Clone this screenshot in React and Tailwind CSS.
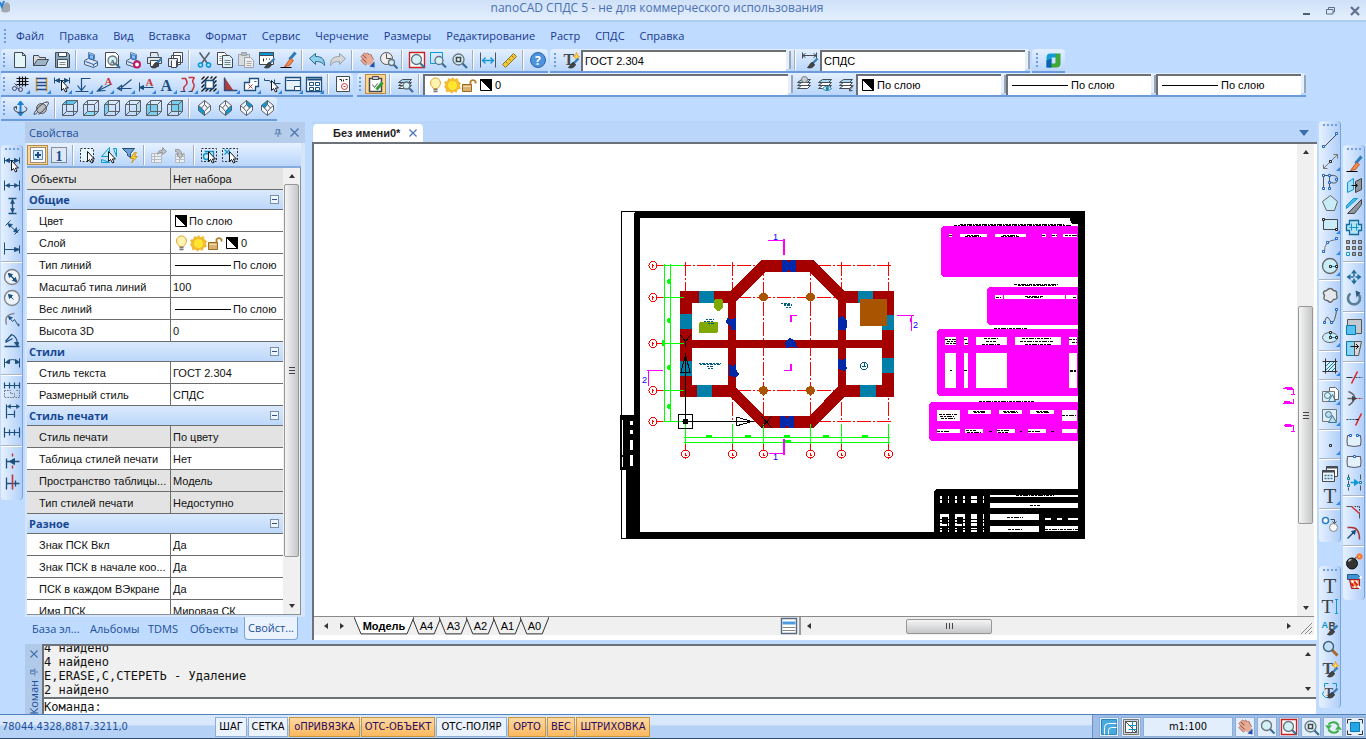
import React from 'react';
import clsx from 'clsx';

const INK = '#444a52';
const NAVY = '#1c4f7c';
const CYAN = '#0a98d6';
const RED = '#c4353a';
const SKY = '#c9ecf7';

const p = (d, stroke = INK, fill = 'none', w = 1) => (
    <path d={d} stroke={stroke} fill={fill} strokeWidth={w} />
);
const t = (ch, x, y, size, fill = INK, family = 'Liberation Serif') => (
    <text x={x} y={y} fontSize={size} fill={fill} fontFamily={family} fontWeight="bold">{ch}</text>
);

// shared pieces
const lens = (x, y, r) => [
    p(`M${x + r * 0.7} ${y + r * 0.7}L${x + r + 3} ${y + r + 3}`, '#3d6f9c', 'none', 2.2),
    p(`M${x - r} ${y}a${r} ${r} 0 1 0 ${2 * r} 0a${r} ${r} 0 1 0 ${-2 * r} 0`, '#66727d', '#d3f0f5', 1.3),
];
const brush = [p('M15 6L10 11', '#3c7fb5', 'none', 2.4), p('M10 10c-2 0-2 2-5 5c3 1 6 0 7-3z', '#333', '#444')];
const cursor = p('M7 4v10l2-2l2 3.500l1.500-.8l-1.600-3.200h3z', '#000', '#fff', 0.9);
const node = (x, y) => p(`M${x - 1} ${y - 1}h2v2h-2z`, '#1d62c9', '#fff', 1);
const hand = [
    p('M2 3L8 9M4 1L10 7M7 1L12 7M10 2L13 8M2 7L7 12', '#8f4a3b', 'none', 3),
    p('M2 3L8 9M4 1L10 7M7 1L12 7M10 2L13 8M2 7L7 12', '#e8ac96', 'none', 1.8),
    p('M6 6l6-1l2 4l-2 4l-4-1z', 'none', '#e8ac96'),
    p('M10 14l5-5v6z', 'none', '#1f50b5'),
];
const cube = [p('M0 4h11v11H0zM0 4L4 0h11v11L11 15M11 4L15 0M4 0v11h11M4 11L0 15', '#5a6068')];
const gem = [
    p('M8 0L14 5v5L8 15L2 10V5z', '#5a6068'),
    p('M8 0v4L5 7.500L8 11L11 7.500L8 4M2 5l3 2.500M14 5l-3 2.500M8 11v4', '#5a6068'),
];
const stack = [
    p('M5 9h9l-3 3H1z', INK, '#fff'),
    p('M5 6h9l-3 3H1z', INK, '#fff'),
    p('M5 3h9l-3 3H1z', INK, '#a9d8ef'),
];
const printer = [
    p('M5 6V0l6 2v5', '#5d7fa8', '#f4f8fc'),
    p('M1 8l4-2l9 3v4l-4 2l-9-3z', '#4a5f7d', '#dbe5f0'),
    p('M6 2l4 1v4L6 6z', '#2d6fd1', '#8fc0f5'),
    p('M2 9l8 3v2M10 12l4-2', '#2458b5'),
];

const icons = {
    new: [p('M2 0h8l3 3v12H2z', INK, '#e3f5f7'), p('M10 0v3h3')],
    open: [p('M0 13V3h5l1 2h6v3', INK, '#ddd'), p('M0 13L4 7h11l-3 6z', INK, '#9db4c4')],
    save: [p('M1 0h12l2 2v13H1z', INK, '#86a9bd'), p('M4 0h8v4H4z', INK, '#fff'), p('M3 7h10v8H3z', INK, '#eef8fa'), p('M5 10h6M5 12h6', '#888')],
    print: printer,
    preview: [p('M1 0h10l3 3v12H1z', INK, '#fff'), ...lens(8, 8, 4.5), t('A', 5.5, 11, 7)],
    printset: [...printer, p('M8.500 12a3 3 0 1 0 6 0a3 3 0 1 0-6 0', '#c2185b', '#fff', 2)],
    plot: [p('M4 4V0h7l1 4M1 5h14v6H1z', INK, '#dfe5ea'), p('M4 8h8v6H4z', INK, '#fff'), ...brush],
    publish: [p('M6 0h9v10H6zM4 3h9v9H4z', INK, '#fff'), p('M1 6h9v8H1z', INK, '#e3e7ea'), p('M4 8v7h5V8', INK, '#fff')],
    cut: [p('M3 0L11 11M13 0L5 11', '#56616b', 'none', 1.6), p('M2 13a2 2 0 1 0 4-1a2 2 0 1 0-4 1M10 12a2 2 0 1 0 4 1a2 2 0 1 0-4-1', CYAN, 'none', 1.6)],
    copy: [p('M0 0h7l2 2v10H0z', INK, '#fff'), p('M5 3h7l3 3v9H5z', INK, '#dff3f8'), p('M7 8h6M7 10h6M7 12h6M2 4h2M2 6h2M2 8h2', '#78838c')],
    paste: [p('M0 2h11v11H0z', '#9aa1a8', '#d9dde0'), p('M3 0h5v3H3z', '#9aa1a8', '#bbb'), p('M6 5h6l3 3v7H6z', '#9aa1a8', '#eee'), p('M8 9h5M8 11h5M8 13h5', '#aaa')],
    match: [p('M0 0h14v12H0z', INK, '#fff'), p('M0 0h14v3H0z', INK, CYAN), p('M4 6v3M7 6v1M10 6v1', '#222'), ...brush],
    erase: [p('M15 0L9 7', '#2d7cb8', 'none', 3), p('M10 6l3 2l-4 5l-5 1z', '#c55a2a', '#f08a4c'), p('M0 15h11', '#000')],
    undo: [p('M0 6L6 1v3c6 0 9 2 9 9c-2-3-4-4-9-4v3z', '#2c6a94', '#8fd0ea')],
    redo: [p('M15 6L9 1v3C3 4 0 6 0 13c2-3 4-4 9-4v3z', '#9a9fa5', '#d4d6d8')],
    pan: hand,
    zoomrt: [p('M0 6a6 6 0 1 0 12 0a6 6 0 1 0-12 0M6 1v5h5', '#555', '#eee'), ...lens(11, 10, 3)],
    zoomwin: [p('M0 0h15v15H0z', '#c62323', '#fff', 1.4), ...lens(7, 7, 5)],
    zoomsel: [p('M0 0h12v11H0z', CYAN), ...lens(8.5, 8, 4)],
    zoomall: [...lens(7, 7, 5.5), p('M5 5h4v4H5z', INK, '#fff', 1.6)],
    dist: [p('M0 0v15M15 0v15', '#555'), p('M2 8h11M5 5L2 8l3 3M10 5l3 3l-3 3', CYAN, 'none', 1.3)],
    ruler: [p('M1 12L12 1l3 3L4 15z', '#8b7320', '#f0c93a'), p('M4 9l2 2M7 6l2 2M10 3l2 2', '#8b7320')],
    help: [p('M0 7.500a7.500 7.500 0 1 0 15 0a7.500 7.500 0 1 0-15 0', '#2c66b0', '#4d93dd'), t('?', 4.5, 12, 12, '#fff', 'Open Sans')],
    tstyle: [t('T', 0, 12, 16), p('M13 0l1 3l2 1l-2 1l-1 3l-1-3l-2-1l2-1z', '#f59a1d', '#ffe45c', 1), ...brush],
    dstyle: [p('M0 0v6M14 0v6M0 3h14M3 1L0 3l3 2M11 1l3 2l-3 2'), ...brush],
    nano: [
        <path key="n1" d="M1 15V5q0-4 4-4h6v4H7q-1 0-1 1v9z" fill="#129bd7" />,
        <path key="n2" d="M15 1v10q0 4-4 4H5v-4h4q1 0 1-1V1z" fill="#3fa63a" />,
        <path key="n3" d="M1 15V8l5-2v9z" fill="#0b62ae" />,
    ],
    grid: [p('M7 0v10M10 0v10M13 0v10M4 2h12M4 5h12M4 8h12', '#111', 'none', 1.2), p('M5 10L2 7M0 12a2 2 0 1 0 4 0a2 2 0 1 0-4 0M6 13a2 2 0 1 0 4 0a2 2 0 1 0-4 0M4 11l3 2', '#446')],
    ladder: [p('M3 1v14M13 1v14', '#d69c16', 'none', 1.6), p('M3 2h10M3 6h10M3 9h10M3 13h10', '#24478f', 'none', 1.3)],
    dimcur: [p('M0 1v6M15 1v6M0 4h15', NAVY), p('M1 4l4-2v4zM14 4l-4-2v4z', NAVY, NAVY), cursor],
    level: [p('M0 15h13M6 14V2h9M2 9l4 5l4-5', NAVY, 'none', 1.2)],
    leader: [p('M14 8L2 14M6 9L1 14.500L9 14', NAVY, 'none', 1.2), t('A', 8, 8, 11, RED)],
    slope: [p('M0 12h14M14 3L4 11M4 9l-4 3l4 2z', NAVY, 'none', 1.2)],
    note: [p('M1 6v9M1 11h14M1 11l4-2v4z', NAVY, NAVY), t('A', 7, 9, 11, RED)],
    text: [t('A', 1, 14, 16, NAVY)],
    curve: [p('M1 2h4q3 5 0 7t-1 6M8 1h6M14 1q-3 4-1 6t-2 8', RED, 'none', 1.5), p('M0 15h5M8 15h4', NAVY)],
    hatchfr: [p('M0 3L3 0M0 7L7 0M9 2L11 0M11 4L15 0M12 7l3-3M12 11l3-3M8 15l7-7M12 15l3-3M4 15l3-3M0 15l4-4M0 11l3-3', '#111', 'none', 1.3), p('M4 4h8v8H4z', NAVY, '#fff', 1.6)],
    corner: [p('M2 1v13l9 0z', 'none', '#b23b3b'), p('M2 1v13h13', '#30507a', 'none', 1.4)],
    group: [p('M6 2h9v8h-3v4H1V6h5z', NAVY, '#fff', 1.3), p('M5 8l4 4M9 8l-4 4', RED), p('M11 5h2', NAVY)],
    pick: [p('M0 2v2h5l2 3h9M10 7V3', NAVY), cursor],
    layout: [p('M0 1h15v13H0z', NAVY, '#e6f3fb', 1.3), p('M1 4h14M9 10h6v4H9z', NAVY, '#fff')],
    form: [p('M0 1h15v14H0z', NAVY, '#fff', 1.3), p('M1 3h14', NAVY, 'none', 2), p('M3 6h4v3H3zM9 6h4v3H9zM3 11h4v3H3zM9 11h4v3H9z', NAVY)],
    page: [p('M1 0h13v15H1z', INK, '#fff'), p('M4 3h2v2M8 3v2M10 3h2', '#222'), p('M6 10a3 3 0 1 0 6 0a3 3 0 1 0-6 0M8 10h2', RED)],
    clip: [p('M1 2h12v13H1z', INK, '#fff', 1.5), p('M4 0h6v3H4z', INK, '#ccc'), p('M4 8l2 3l3-4', '#555'), p('M14 6L8 13', '#2f9d3d', 'none', 3)],
    layers: [...stack, ...lens(9, 9, 3.5)],
    lyr1: [...stack, p('M5 3a3 3 0 1 0 6 0a3 3 0 1 0-6 0', '#777', '#c9ced3')],
    lyr2: [...stack, p('M5 12q4.500-4.500 9 0q-4.500 4-9 0z', '#1681ab', '#fff'), p('M8.500 12a1.300 1.300 0 1 0 2.600 0a1.300 1.300 0 1 0-2.600 0', '#1681ab', '#1681ab')],
    lyr3: [...stack, p('M15 9l-4 5M11 12v2.500l3-.5')],
    bulb: [p('M3 5.500a5 5 0 1 1 8.500 3.500L10 11H6L4.500 9Q3 8 3 5.500z', '#e0a638', '#fff3b0'), p('M6 12h4M6 14h4', '#777', 'none', 1.4)],
    sun: [p('M8 0l2 2l3-1l.5 3l2.500 1.500L15 8l1 3l-3 .8l-1 3l-3-1l-2 2l-2-2l-3 .5l-.5-3L0 9.500L1 7L0 4.500L3 4l.8-3L6.500 2z', '#e8a51c', '#f5bd2a', 0.5), p('M4 8a4 4 0 1 0 8 0a4 4 0 1 0-8 0', '#ffe94f', '#ffe629')],
    lock: [p('M9 8V4a3 3 0 0 1 5 0v2', '#b07f2a', 'none', 1.8), p('M1 7h9v7H1z', '#9c6a1f', '#d8b271'), p('M2 9h7', '#f3deb4')],
    swatch: [p('M2 2h11v11H2z', '#000', '#fff', 1), p('M2 2L13 13V2z', '#000', '#000', 1)],
    orbit: [p('M8 1v14', '#1d7fd1', 'none', 2), p('M5 4l3-3.500L11 4zM5 12l3 3.500L11 12z', '#1d7fd1', '#1d7fd1'), p('M12 6q4 2 2 4t-6 2t-6-2t2-4M1 7l3-1v3')],
    planet: [p('M3 8a5 5 0 1 0 10 0a5 5 0 1 0-10 0', '#555', '#b9bdc2'), p('M4 12q-5 4-3 0q4-7 10-10q6-2 3 3Q10 11 5 14', '#444')],
    cubeT: [p('M0 4L4 0h11L11 4z', 'none', '#5cc4ec'), ...cube],
    cubeB: [p('M0 15l4-4h11l-4 4z', 'none', '#8fdcf2'), ...cube],
    cubeL: [p('M0 4L4 0v11l-4 4z', 'none', '#7dd2f0'), ...cube],
    cubeR: [p('M11 4l4-4v11l-4 4z', 'none', '#b7dcea'), ...cube],
    cubeF: [p('M0 4h11v11H0z', 'none', '#7accea'), ...cube],
    cubeK: [p('M4 0h11v11H4z', 'none', '#7accea'), ...cube],
    gemSW: [p('M8 0L14 5v5L8 15L2 10V5z', 'none', '#f4f8fc'), p('M2 5L5 7.500L8 11v4L2 10z', 'none', CYAN), ...gem],
    gemSE: [p('M8 0L14 5v5L8 15L2 10V5z', 'none', '#f4f8fc'), p('M14 5L11 7.500L8 11v4L14 10z', 'none', CYAN), ...gem],
    gemNE: [p('M8 0L14 5v5L8 15L2 10V5z', 'none', '#f4f8fc'), p('M8 0v4L11 7.500L14 5z', 'none', CYAN), ...gem],
    gemNW: [p('M8 0L14 5v5L8 15L2 10V5z', 'none', '#f4f8fc'), p('M8 0v4L5 7.500L2 5z', 'none', CYAN), ...gem],
    selplus: [<path key="s" d="M0 0h15v15H0z" fill="#fff" stroke="#333" strokeDasharray="1 1" />, p('M3 3h9v9H3z', '#5b87b5', '#dcebf8'), p('M7.500 4.500v6M4.500 7.500h6', '#174d8d', 'none', 2)],
    selone: [<path key="s" d="M0 0h15v15H0z" fill="#dfe9f5" stroke="#333" strokeDasharray="1 1" />, t('1', 4, 13, 14, '#174d8d')],
    selbox: [<path key="s" d="M0 1h13v13H0z" fill="#e7f6fa" stroke="#333" strokeDasharray="2 1.500" />, cursor],
    selpoly: [p('M0 9L8 0v9zM0 12l8 3H0zM12 1l3 8V1z', CYAN, '#bfe9f8'), cursor],
    filter: [p('M0 1h12L8 6v4L5 8V6z', NAVY, '#6f9fce'), p('M12 5L8 11h3l-2 4.500L15 9h-3l2-4z', '#c78b12', '#ffcf2b', 0.8)],
    toprop: [p('M0 6h10v9H0zM0 9h10M0 12h10M3 6v9', '#b4bbc3', '#eceff1'), p('M6 7q1-5 5-4V0l4 4l-4 3V5q-3-1-5 2z', '#999', '#bcc2c8')],
    fromprop: [p('M3 6h9v9H3zM3 9h9M3 12h9M7 6v9', '#b4bbc3', '#eceff1'), p('M3 2q6-1 6 5h2l-3 4l-4-4h2q0-3-3-3z', '#999', '#bcc2c8')],
    selobj: [<path key="s" d="M0 1h15v13H0z" fill="none" stroke="#333" strokeDasharray="2 1.500" />, p('M3 4h9v7H6M2 9a3 3 0 1 0 6 0a3 3 0 1 0-6 0', '#128fc4', '#c9ecf7', 1.4), cursor],
    selx: [<path key="s" d="M0 1h15v13H0z" fill="none" stroke="#333" strokeDasharray="2 1.500" />, p('M2 2l5 5M7 2L2 7', CYAN, 'none', 1.2), cursor],
    dimlin: [p('M0 3v10M15 3v10M1 8h14', NAVY), p('M1 8l4-2v4zM14 8l-4-2v4z', NAVY, NAVY, 0.6)],
    dimver: [p('M4 0h8M4 15h8M8 1v14', NAVY, 'none', 1.3), p('M8 1l-2 4h4zM8 14l-2-4h4z', NAVY, NAVY, 0.6)],
    dimali: [p('M1 6L6 1M10 15l5-5M3 4l10 9', NAVY), p('M3 4l2 4l3-3zM13 13l-1-5l-3 4z', NAVY, NAVY, 0.6)],
    dimord: [p('M0 2v12M15 5v8M0 9h14', NAVY), p('M15 9l-5-2v4z', NAVY, NAVY)],
    dimdia: [p('M0 7.500a7 7 0 1 0 15 0a7 7 0 1 0-15 0', '#7f858b', '#edf3f8', 1.4), p('M4 4l8 8', NAVY, 'none', 1.4), p('M4 4l4 1l-3 3zM12 12l-4-1l3-3z', NAVY, NAVY)],
    dimrad: [p('M0 7.500a7 7 0 1 0 15 0a7 7 0 1 0-15 0', '#7f858b', '#edf3f8', 1.4), p('M5 5l4 4', NAVY), p('M4 4l4 1l-3 3z', NAVY, NAVY)],
    dimjog: [p('M2 13Q-1 3 10 2', '#7f858b', 'none', 1.4), p('M4 5l4 5l2-2l3 5', NAVY), p('M4 5l4 1l-3 2zM14 12v3M12.500 13.500h3', NAVY, NAVY, 0.7)],
    dimang: [p('M0 14h15M1 9L7 2Q13 4 13 13M1 10l7-4', NAVY, 'none', 1.3), p('M13 14l-3-4h4z', NAVY, NAVY)],
    dimarc: [p('M0 5v9M15 5v9M2 9q6-6 12 0', NAVY), p('M1 9l4-3v4zM15 9l-4-3v4z', NAVY, NAVY)],
    dimqk: [p('M0 0v6M5 0v6M10 0v6M15 0v6M0 3h15', NAVY, 'none', 1.2), <path key="s" d="M0 8h6v3h4v4H0zM12 8h3v7h-4" fill="none" stroke="#777" strokeDasharray="1.500 1" />],
    dimbase: [p('M2 1v14M15 3H3M10 7v7M3 11h7', NAVY, 'none', 1.2), p('M3 3l3-2v4zM15 3l-3-2v4z', NAVY, NAVY, 0.5)],
    dimcont: [p('M0 3v10M5 5v6M10 5v6M15 3v10M0 8h15', NAVY, 'none', 1.2)],
    dimbrk: [p('M2 5v10M2 8h13', NAVY, 'none', 1.3), p('M5 8l5-3v6z', NAVY, NAVY), p('M8 0v3M8 12v3', RED, 'none', 1.4)],
    dimbrk2: [p('M2 3v12M2 9h13M11 6v6', NAVY, 'none', 1.3), p('M8 0v15', RED, 'none', 1.6)],
    line: [p('M2 14L14 2'), node(1, 14), node(14, 1)],
    xline: [p('M1 15L15 1M11 1h4v4M1 11v4h4', '#777'), p('M7 7h2v2H7z', '#222', '#fff')],
    pline: [p('M1 14V1h6v13M8 8q7 2 7-3t-7-4', '#555'), node(1, 1), node(7, 1), node(1, 14), node(7, 14), node(7, 8), node(14, 5)],
    poly: [p('M8 0l7 6L12 15H4L0 6z', '#666', SKY)],
    rect: [p('M1 3h14v10H1z', INK, SKY), p('M0 2h2v2H0zM13 12h2v2h-2z', '#222', '#fff')],
    arc: [p('M2 15Q1 3 14 2', '#777'), node(1, 14), node(5, 5), node(14, 1)],
    circle: [p('M0 7.500a7 7 0 1 0 15 0a7 7 0 1 0-15 0', '#666', SKY, 1.3), p('M8 8h6', CYAN), p('M7 7h2v2H7zM13 7h2v2h-2z', '#222', '#fff')],
    cloud: [p('M4 3q4-4 7 0q4 0 3 4q2 5-3 5q-3 5-6 1q-5 0-3-5q-3-4 2-5z', '#666', '#e3e8ec', 1.4)],
    spline: [p('M2 14q2-9 5-3t5 0t2-10', '#555'), node(2, 14), node(9, 14), node(14, 1)],
    ellipse: [p('M0 8a7.500 5 0 1 0 15 0a7.500 5 0 1 0-15 0', '#666', SKY), p('M8 8h6M8 8V3', CYAN), p('M7 7h2v2H7zM13 7h2v2h-2zM7 2h2v2H7z', '#222', '#fff')],
    hatch: [p('M3 3h10v10H3z', CYAN, '#d7f1fa'), p('M3 8l5-5M3 12L12 3M5 13l8-8M9 13l4-4', '#147aa8'), p('M3 0v15M13 0v15M0 3h15M0 13h15', '#333')],
    block: [p('M7 0h6l3 3v9H7z', '#666', '#fff'), p('M0 4h12v10H0z', '#777', '#dceff5'), p('M2 8a3 3 0 1 0 6 0a3 3 0 1 0-6 0M6 14l4-7l3 7z', '#3c7598')],
    block2: [p('M0 1h14v12H0z', '#777', '#dceff5'), p('M3 6a3 3 0 1 0 6 0a3 3 0 1 0-6 0M6 14l4-7l4 7z', '#3c7598', '#c0dbe8')],
    point: [p('M7 7h2v2H7z', '#222', '#fff')],
    table: [p('M4 0h11v10H4z', INK, '#fff'), p('M0 4h12v11H0z', INK, '#e7f4fa'), p('M0 5h12M4 1h11', INK, 'none', 2), p('M2 9h2M5 9h2M8 9h2M2 12h2M5 12h2M8 12h2', '#3c7598', 'none', 1.4)],
    bigT: [<text key="t" x="1" y="15" fontSize="21" fill="#3b3f45" fontFamily="Liberation Serif">T</text>],
    orbits: [p('M0 4a3 3 0 1 0 6 0a3 3 0 1 0-6 0', '#2a7fc9', '#fff', 1.5), p('M7 11a4 4 0 1 0 8 0a4 4 0 1 0-8 0', '#888', '#f5f8fa'), p('M8 3h4v3M10 5l2 2l2-2')],
    textI: [<text key="t" x="-1" y="14" fontSize="19" fill="#3b3f45" fontFamily="Liberation Serif">T</text>, p('M14 1v14M12.500 1h3M12.500 15h3', CYAN)],
    ab: [t('A', -1, 8, 9, CYAN, 'Liberation Sans'), t('B', 6, 10, 10, '#444', 'Liberation Sans'), ...brush],
    find: [p('M9 9l6 6', '#a5692c', 'none', 3), p('M1 6a5 5 0 1 0 10 0a5 5 0 1 0-10 0', '#3f5f80', '#bfe0f5', 1.4)],
    zoomio: lens(7, 6, 5),
    tset: [p('M2 5V1h4M10 1h4v4M1 9l-1 3l3 3h3', CYAN), t('T', 2, 13, 13), ...brush],
    mirror: [p('M1 5l6-4v11l-6 3z', CYAN, '#a6dff5'), p('M9 4l6-3v11l-6 3z', '#444', '#8f979e'), p('M5 8h6M9 6l2 2l-2 2', '#111')],
    offset: [p('M0 10V7l7-7h4z', CYAN, '#4bb9e8'), p('M1 15L15 1v5L8 15z', '#444', '#8e959c')],
    contour: [p('M0 5h3V1h9v4h3v6h-3v4H3v-4H0z', '#13699a', '#b5e3f5', 1.3), p('M3 8h9M5 4v7M10 4v7', CYAN)],
    array: [p('M0 0h3v3H0zM6 0h3v3H6zM12 0h3v3h-3zM0 6h3v3H0zM6 6h3v3H6zM12 6h3v3h-3zM6 12h3v3H6zM12 12h3v3h-3z', '#555', '#aaa'), p('M0 12h3v3H0z', CYAN, '#fff')],
    move: [p('M7.500 0l3 4h-6zM7.500 15l3-4h-6zM0 7.500l4-3v6zM15 7.500l-4-3v6z', 'none', '#1e6d96'), p('M7.500 4v3M7.500 9v3M4 7.500h3M9 7.500h3', '#1e6d96', 'none', 1.6)],
    rotate: [p('M11 3a6 6 0 1 1-7 0', '#5b7f99', 'none', 2.6), p('M9 0l5 2l-4 5z', 'none', '#2c5a78')],
    scale: [p('M1 0h14v14H1z', '#555', '#c3c9cf'), p('M0 6h9v9H0z', '#0b79ad', '#56c1ee')],
    stretch: [p('M0 1h8v14H0z', '#0b79ad', '#8bd4f2'), p('M8 1h7l-3 14H8z', '#555', '#d5d9dc'), p('M4 6h8M9.500 3.500L12 6l-2.500 2.500', '#111')],
    trim: [p('M0 8h6', '#333'), p('M5 14L11 2', '#e02020', 'none', 1.5), <path key="s" d="M9 8h7" stroke="#1c4f7c" strokeDasharray="2 1" />],
    extend: [p('M1 8h7M2 1q7 3 6 7t-6 7', '#666', 'none', 1.4), <path key="s" d="M9 8h7" stroke="#d02020" strokeDasharray="2 1" />, p('M6 6l4 2l-4 2z', '#444', '#444')],
    break: [<path key="s" d="M0 8h9" stroke="#1c4f7c" strokeDasharray="2 1" />, p('M9 14L15 2', '#e02020', 'none', 1.5), p('M9 8h3', '#111')],
    open1: [p('M5 3H1q-1 6 0 10q7 2 13 0q1-4 0-10h-3', '#556', '#e3f1fa'), node(4, 3), node(11, 3)],
    open2: [p('M1 3q-1 6 0 10q7 2 13 0q1-4 0-10z', '#556', '#e3f1fa'), node(8, 3)],
    join: [p('M2 0v3M2 6v4M2 13v3M14 0v5M14 11v5', '#555'), p('M4 8h6', CYAN, 'none', 1.5), p('M8 5l4 3l-4 3z', CYAN, CYAN), p('M1 3h2v2H1zM1 10h2v2H1zM13 7h2v2h-2z', '#0b79ad', '#fff')],
    chamfer: [p('M0 3h6M13 9v6', '#555'), p('M5 3l8 7', '#d13030', 'none', 1.5), <path key="s" d="M8 3h5v5" fill="none" stroke="#333" strokeDasharray="1.500 1" />],
    fillet: [p('M1 3h4q8 0 8 12', '#a33', 'none', 1.5), p('M1 14l7-7', NAVY, 'none', 1.5), p('M9 6l-4 1l3 3z', NAVY, NAVY)],
    bomb: [p('M0 10a5.500 5.500 0 1 0 11 0a5.500 5.500 0 1 0-11 0', '#111', '#333'), p('M2 8q1-2 3-2', '#bbb', 'none', 1.6), p('M9 5q1-2 3-2', '#333', 'none', 1.6), p('M10 3a3 3 0 1 0 6 0a3 3 0 1 0-6 0', '#f9a58c', '#ef5a2a'), p('M12 3h2', '#ffe45c', 'none', 2)],
    purge: [p('M1 0h10l2 2v3H1z', '#1d5b94', '#3f93d1'), p('M3 5h10v9H5z', '#a12', '#f08a4c'), p('M5 6l2 2M9 6l2 3M6 11l3 2M11 11l3 3M13 4l2-2', '#fff', 'none', 1.8), p('M8 7l3 4M5 9l2 3', '#d11', 'none', 1.6)],
    pipes: [p('M0 0h15v15H0z', '#2c86bd', '#49a9dd'), p('M3 15V8q0-4 4-4h8M7 15v-4q0-3 3-3h5', '#fff')],
    gridbox: [p('M0 0h15v15H0z', '#777', '#d0d5da'), p('M2 2h11v11H2z', '#555', '#fff'), p('M9 2v11M5 6h8M5 10h8', CYAN), p('M2 2l11 11H2z', '#555')],
    regen: [p('M13 6A6 6 0 0 0 3 5M3 10a6 6 0 0 0 10 1', '#3fae49', 'none', 2), p('M0 6h6L3 10zM10 10l3-4l3 4z', '#3fae49', '#3fae49', 0.4)],
    full: [p('M0 4V0h4M11 0h4v4M15 11v4h-4M4 15H0v-4', '#333', 'none', 1), p('M3 3h9v9H3z', '#0b79ad', '#22a6e8')],
    list: [p('M0 0h15v15H0z', '#556b85', '#fff', 1.4), p('M1 4.500h13', '#4c9de0', 'none', 3), p('M1 9h13M1 12h13', '#888', 'none', 1)],
};

const Icon = ({ name, className }) => React.createElement(
    'svg',
    { viewBox: '-0.5 -0.5 16 16', className: className || 'w-4 h-4 shrink-0 overflow-visible', fill: 'none' },
    ...icons[name]
);

const Tool = ({ name, drop, active, vertical }) => (
    <button
        aria-label={name}
        className={clsx(
            'relative shrink-0 flex items-center justify-center',
            vertical ? 'w-full h-[21px]' : 'w-[21px] h-5',
            active && 'bg-[#ffd591] border border-[#b98a45]'
        )}
    >
        <Icon name={name} />
        {drop && <span className="absolute right-0 bottom-0 w-1 h-1 bg-[#2f86e8] [clip-path:polygon(100%_0,100%_100%,0_100%)]" />}
    </button>
);

// "|" is a separator, a trailing "+" marks a drop-down, "*" a pressed button
const Tools = ({ items, vertical }) => items.split(' ').map((item, i) => {
    if (item === '|') {
        return vertical
            ? <span key={i} className="shrink-0 w-full h-2 flex items-center"><i className="w-full h-0.5 bg-[#a9b4c4] border-b border-white" /></span>
            : <span key={i} className="shrink-0 w-2 h-5 flex justify-center"><i className="w-0.5 h-full bg-[#a3adbb] border-r border-white" /></span>;
    }
    return <Tool key={i} name={item.replace(/[+*]/, '')} drop={item.includes('+')} active={item.includes('*')} vertical={vertical} />;
});

const Grip = ({ vertical }) => (
    <span className={clsx('shrink-0 flex gap-0.5', vertical ? 'h-2 pl-1 items-center' : 'flex-col w-2 pl-0.5 justify-center')}>
        {[0, 1, 2, 3].map((i) => <i key={i} className="w-0.5 h-0.5 bg-[#6f9ddb]" />)}
    </span>
);

const Bar = ({ children, className }) => (
    <div className={clsx('h-6 flex items-center rounded-t-sm border-b-2 border-[#6b9bdc] bg-linear-to-b from-[#e3efff] to-[#b9d6fb]', className)}>
        {children}
    </div>
);

const Combo = ({ label, value, className, children }) => (
    <label className={clsx('h-[21px] flex items-center gap-px pl-0.5 bg-white border-t-2 border-l-2 border-[#6b6f76] text-[11px] text-black font-[Liberation_Sans,sans-serif]', className)}>
        {children}
        <select aria-label={label} className="flex-1 min-w-0 appearance-none bg-transparent outline-none">
            <option>{value}</option>
        </select>
    </label>
);

const ComboEnd = () => <span className="w-[5px] h-[18px] shrink-0 border-r-2 border-[#9aa5b5] bg-[#e6f0fd]" />;

const ThinLine = () => <i className="inline-block align-middle w-14 h-px bg-black ml-0.5 mr-0.5" />;

const VToolbar = ({ items, className }) => (
    <div className={clsx('w-[22px] shrink-0 flex flex-col pb-2 rounded-sm bg-linear-to-r from-[#e6f1ff] to-[#b1cff8] border-r border-[#7ba3da]', className)}>
        <Grip vertical />
        <Tools items={items} vertical />
    </div>
);

const Arrow = ({ dir }) => {
    const d = { up: 'M1 6l3-4l3 4z', down: 'M1 2l3 4l3-4z', left: 'M6 1L2 4l4 3z', right: 'M2 1l4 3l-4 3z' }[dir];
    return <button aria-label={dir} className="shrink-0 w-4 h-4 flex items-center justify-center"><svg viewBox="0 0 8 8" className="w-2 h-2"><path d={d} fill="#333" /></svg></button>;
};

const VScroll = ({ before, thumb, after }) => (
    <div className="shrink-0 w-[17px] flex flex-col items-center bg-[#f0f0f0]">
        <Arrow dir="up" />
        <div style={{ flexGrow: before }} />
        {thumb > 0 && (
            <div style={{ flexGrow: thumb }} className="w-[15px] border border-[#979797] rounded-xs bg-linear-to-r from-[#f5f5f5] to-[#c6c7c9] flex flex-col gap-0.5 items-center justify-center">
                <i className="w-1.5 h-px bg-[#444]" />
                <i className="w-1.5 h-px bg-[#444]" />
                <i className="w-1.5 h-px bg-[#444]" />
            </div>
        )}
        <div style={{ flexGrow: after }} />
        <Arrow dir="down" />
    </div>
);

const PinIcon = ({ className }) => (
    <svg viewBox="0 0 9 9" className={clsx('w-2 h-2', className)} fill="none" stroke="#4a76ad"><path d="M2.500 5V.5h4V5M.5 5.500h8M4.500 6v3M5.500 1v4" /></svg>
);
const CloseIcon = ({ className }) => (
    <svg viewBox="0 0 9 9" className={clsx('w-2 h-2', className)} fill="none" stroke="#4a76ad" strokeWidth="1.400"><path d="M.5 .5l8 8M8.500 .5l-8 8" /></svg>
);

const menu = ['Файл', 'Правка', 'Вид', 'Вставка', 'Формат', 'Сервис', 'Черчение', 'Размеры', 'Редактирование', 'Растр', 'СПДС', 'Справка'];

const groups = [
    {
        title: 'Общие',
        rows: [
            ['Цвет', <span className="flex items-center"><Icon name="swatch" />По слою</span>],
            ['Слой', <span className="flex items-center gap-px"><Icon name="bulb" /><Icon name="sun" /><Icon name="lock" /><Icon name="swatch" /><span>0</span></span>],
            ['Тип линий', <><ThinLine />По слою</>],
            ['Масштаб типа линий', '100'],
            ['Вес линий', <><ThinLine />По слою</>],
            ['Высота 3D', '0'],
        ],
    },
    { title: 'Стили', rows: [['Стиль текста', 'ГОСТ 2.304'], ['Размерный стиль', 'СПДС']] },
    {
        title: 'Стиль печати',
        rows: [
            ['Стиль печати', 'По цвету', true],
            ['Таблица стилей печати', 'Нет'],
            ['Пространство таблицы...', 'Модель', true],
            ['Тип стилей печати', 'Недоступно', true],
        ],
    },
    {
        title: 'Разное',
        rows: [['Знак ПСК Вкл', 'Да'], ['Знак ПСК в начале коо...', 'Да'], ['ПСК в каждом ВЭкране', 'Да'], ['Имя ПСК', 'Мировая СК']],
    },
];

const PropRow = ({ name, value, muted, root }) => (
    <tr className={clsx('h-[22px]', muted && 'bg-[#e3e3e3]')}>
        <td className={clsx('py-0 border-b border-r border-[#6d6d6d] whitespace-nowrap overflow-hidden', root ? 'pl-1' : 'pl-3')}>{name}</td>
        <td className="py-0 border-b border-[#6d6d6d] pl-0.5 whitespace-nowrap overflow-hidden">{value}</td>
    </tr>
);

const Properties = () => (
    <section className="w-[280px] shrink-0 flex flex-col mt-px">
        <div className="flex-1 min-h-0 flex flex-col bg-[#d5e5fa] pl-0.5 pr-1 pb-0.5">
            <header className="h-[21px] -ml-0.5 -mr-1 pl-1 pr-1.5 flex items-center bg-[#b5cdea] text-[#1d4f99]">
                <h2 className="flex-1">Свойства</h2>
                <button aria-label="pin"><PinIcon /></button>
                <button aria-label="close" className="ml-2"><CloseIcon className="w-[9px] h-[9px]" /></button>
            </header>
            <div className="h-[25px] flex items-center bg-linear-to-b from-[#e6f1ff] to-[#b9d6fb] border-b-2 border-[#86abdc]">
                <Tools items="selplus* selone | selbox selpoly filter | toprop fromprop | selobj selx" />
            </div>
            <div className="flex-1 min-h-0 flex bg-white border-r border-b border-[#8a9099]">
                <div className="flex-1 min-w-0 overflow-hidden">
                    <table className="w-full table-fixed border-separate border-spacing-0 text-[11px] text-[#111] font-[Liberation_Sans,sans-serif]">
                        <colgroup><col className="w-[144px]" /><col /></colgroup>
                        <tbody>
                            <PropRow name="Объекты" value="Нет набора" muted root />
                            {groups.map((g) => (
                                <React.Fragment key={g.title}>
                                    <tr className="h-5">
                                        <th colSpan={2} className="p-0 pl-0.5 pr-1 text-left border-b border-[#6d6d6d] bg-linear-to-b from-[#dbe9fc] to-[#bcd8fb] text-[#174793] font-[Open_Sans,sans-serif]">
                                            <div className="flex items-center h-[19px]">
                                                <span className="flex-1">{g.title}</span>
                                                <button aria-label="collapse" className="w-[9px] h-[9px] flex items-center justify-center border border-[#7c8fa8] bg-[#eef5fd]"><i className="w-[5px] h-px bg-[#34517a]" /></button>
                                            </div>
                                        </th>
                                    </tr>
                                    {g.rows.map(([name, value, muted]) => <PropRow key={name} name={name} value={value} muted={muted} />)}
                                </React.Fragment>
                            ))}
                        </tbody>
                    </table>
                </div>
                <VScroll before={0} thumb={370} after={42} />
            </div>
        </div>
        <nav className="h-[23px] shrink-0 flex items-center text-[11px] text-[#1d4f99] pl-[7px]">
            <button className="w-[58px] text-left">База эл...</button>
            <button className="w-[58px] text-left">Альбомы</button>
            <button className="w-[42px] text-left">TDMS</button>
            <button className="w-[54px] text-left">Объекты</button>
            <button className="w-[54px] h-full rounded-b-sm border border-t-0 border-[#7ba3da] bg-[#eaf3ff]">Свойст...</button>
        </nav>
    </section>
);

const axesX = [685.5, 732.5, 763.5, 810.5, 841.5, 888.5];
const axesY = [265.5, 297.5, 343.5, 390.5, 421.5];
const columns = [[763.5, 297], [810.5, 297], [763.5, 390.5], [810.5, 390.5]];

// windows, x y w h
const windows = [
    [699, 291, 15, 12], [858, 291, 15, 12], [680, 314, 12, 15], [680, 361, 12, 15],
    [882, 315, 12, 15], [882, 358, 12, 15], [697, 385, 15, 12], [860, 385, 16, 12],
];
const tableBlocks = [[941, 226, 137, 51], [987, 287, 91, 38], [937, 329, 141, 67], [929, 402, 149, 39]];
const cells = [
    [949, 234, 3, 3], [960, 234, 27, 3], [995, 234, 31, 3], [1042, 234, 4, 3], [1052, 234, 5, 3], [1063, 234, 14, 3],
    [995, 295, 8, 4], [1004, 295, 61, 4], [1066, 295, 11, 4],
    [945, 337, 11, 8], [964, 337, 4, 8], [976, 337, 31, 8], [1015, 337, 46, 8], [1069, 337, 8, 8],
    [945, 353, 11, 35], [964, 353, 4, 35], [976, 353, 31, 35], [1069, 353, 8, 35],
    [937, 410, 23, 11], [968, 410, 23, 4], [999, 410, 23, 4], [1030, 410, 24, 4], [1062, 410, 15, 11],
    [937, 429, 23, 4], [965, 429, 18, 4], [997, 429, 18, 4], [1028, 429, 18, 4], [1062, 429, 15, 4],
];
const stampCells = [
    [990, 495, 88, 2], [990, 503, 88, 5], [990, 514, 49, 6], [990, 526, 49, 6], [1045, 526, 33, 5], [1045, 518, 6, 2], [1057, 518, 5, 2], [1068, 518, 10, 2],
];
const stampCols = [[940, 2], [948, 1], [955, 2], [963, 2], [971, 6], [983, 1]];
const scribbles = [
    'M954 225.500h118', 'M1014 284.500h45', 'M994 328.500h33', 'M979 401.500h55', 'M949 235.500h3M965 236.500h16M967 235.500h12M1001 236.500h19M1003 235.500h15M1042 235.500h4M1052 235.500h5M1065 235.500h12',
    'M1018 285.500h38M996 297.500h5M1025 296.500h18M1027 297.500h14M1073 297.500h3M960 224.500h105', 'M945 339.500h11M947 341.500h9M946 343.500h10M964 339.500h3M965 343.500h3M984 338.500h14M986 341.500h10M982 344.500h18M1022 338.500h30M1020 341.500h34M1025 344.500h26M1069 339.500h8M1072 342.500h5',
    'M950 370.500h2M964 370.500h4M1070 371.500h7M1070 370.500h7', 'M939 414.500h18M940 416.500h15M941 418.500h15M973 411.500h13M1003 411.500h14M1036 411.500h12M974 412.500h11M1004 412.500h14M1037 412.500h12M1062 415.500h15',
    'M937 431.500h12M966 430.500h10M967 432.500h14M997 430.500h12M998 432.500h10M1028 431.500h12M989 431.500h3M1020 431.500h2M1051 431.500h3', 'M1016 495.500h38M1030 505.500h10M1007 517.500h16M1008 529.500h14M1045 529.500h33',
];

const Drawing = () => (
    <svg className="block w-full h-full" shapeRendering="crispEdges" fill="none">
        <g transform="translate(-314 -144)">
            <path d="M621.500 211.500H1084.500V538.500H621.500z" stroke="#000" />
            <path d="M634 538V215q0-4 4-4H1085V539H626V470H620V415H634zM640 218V532H1078V218z" fill="#000" fillRule="evenodd" />
            <path d="M1070 218h8v6h-5q-3-2-3-6z" fill="#000" />
            <path d="M630 421h3v4h-3zM630 430h3v4h-3zM630 440h3v10h-3zM630 455h3v11h-3z" fill="#fff" />
            <path d="M622.500 420v35M622.500 457v10" stroke="#fff" />

            {/* axes */}
            <g stroke="#ff0000" strokeDasharray="14 2 2 2">
                {axesX.map((x) => <path key={x} d={`M${x} 262V422`} />)}
                {axesY.map((y) => <path key={y} d={`M657 ${y}H892`} />)}
            </g>

            <path
                fill="#a50000"
                fillRule="evenodd"
                d="M680 291H730L761 260H814L844 291H894V397H844L814 428H761L730 397H680z
                   M692 303V340H728V303z M692 348V385H728V348z M846 303V340H882V303z M846 348V385H882V348z
                   M736 301L765 272H810L838 301V340H736z M736 348H838V386L810 416H765L736 388z"
            />
            <g fill="#007fa8">
                {windows.map(([x, y, w, h]) => <rect key={`${x}-${y}`} x={x} y={y} width={w} height={h} rx="1" />)}
            </g>
            <g fill="#0028a8">
                <path d="M782 260h4l3 2l3-2h4v12h-4l-3-2l-3 2h-4z" />
                <path d="M780 416h4l3 2l3-2h4v12h-4l-3-2l-3 2h-4z" />
                <path d="M727 318l4 1l5-1v12l-5 0v-4l-5-3z" />
                <path d="M729 364l4 2l3-2v5l3 5l-3 3l-7-1z" />
                <path d="M838 318l4-2l5 4v6l-1 4h-8z" />
                <path d="M838 359l4 1l4-2v6l1 5l-3 2l-6-2z" />
                <path d="M785 342l4-4l4 1l3 4l1 5l-5-1l-6 1z" />
            </g>
            <g fill="#a85400">
                {columns.map(([x, y]) => <circle key={`${x}-${y}`} cx={x} cy={y} r="4.500" />)}
                <path d="M860 299h27v27h-27z" />
            </g>
            <path d="M714 300q4-3 9 0v7q-4 8-9 0zM699 324q0-2 4-2h15v9q0 2-4 2h-15z" fill="#7fa800" />

            <g stroke="#ff0000">
                {axesY.map((y) => <circle key={y} cx="653" cy={y} r="4" />)}
                {axesX.map((x) => <circle key={x} cx={x} cy="454" r="4" />)}
                {axesX.map((x) => <path key={x} d={`M${x} 440V450M${x} 452.500v3M${x - 1} 455.500h2`} />)}
                {axesY.map((y) => <path key={y} d={`M652 ${y}h2M652.500 ${y - 2}v4M657 ${y}h5`} />)}
            </g>
            <g stroke="#00ff00">
                <path d="M664.500 264V422M670.500 264V422M684 437.500H890M684 442.500H890" />
                {axesY.map((y) => <path key={y} d={`M663 ${y}H684`} />)}
                {axesX.map((x) => <path key={x} d={`M${x} 424V444`} />)}
                {[281, 320, 367, 406].map((y) => <path key={y} d={`M669.500 ${y - 2}v5M668.500 ${y - 2}v5M667.500 ${y - 1}v3`} />)}
                <path d="M663 340v6M706 436h6M745 436h6M784 436h6M823 436h6M862 436h6M785 441h6" strokeWidth="2" />
            </g>

            <g stroke="#000">
                <path d="M685.500 421.500V355M681 372l4.500-17l4.500 17zM680 335l5.500 6l5.500-6M685.500 341v6M685.500 421.500H752M736 417l16 4.500l-16 4.500zM761 416l11 12M772 416l-11 12" />
                <rect x="678.500" y="414.500" width="14" height="14" rx="1" />
                <circle cx="685.500" cy="421.500" r="2.500" fill="#000" />
            </g>
            <g stroke="#ff00ff">
                <path d="M768 240.500h16M769 453.500h15M897 315.500h17M911.500 316v15M647 370.500h16M648.500 370v16M790 315.500h7M784 370.500h8" />
                <path d="M784 239v16M784 439v16M791 315v7M791 364v7M911 318v4" strokeWidth="2" />
            </g>
            <g stroke="#005a80" strokeDasharray="2 1 3 1">
                <path d="M781 303.500h10M784 304.500h8M784 305.500h8M786 307.500h5M706 319.500h8M704 321.500h10M708 323.500h6M699 363.500h22M700 364.500h20M707 366.500h6M708 368.500h5" />
            </g>
            <circle cx="864" cy="366" r="3.500" stroke="#005a80" />
            <path d="M862 366h4M864 363v3" stroke="#005a80" />
            <g fill="#0000ff" fontSize="9" fontFamily="Liberation Sans">
                <text x="773" y="240">1</text>
                <text x="773" y="460">1</text>
                <text x="913" y="328">2</text>
                <text x="642" y="383">2</text>
            </g>

            {/* specification tables */}
            <g fill="#ff00ff">
                {tableBlocks.map(([x, y, w, h]) => <path key={y} d={`M${x + 2} ${y}H${x + w}V${y + h}H${x + 2}L${x} ${y + h - 2}V${y + 2}z`} />)}
            </g>
            <path d="M936 489H1078V532H934V491z" fill="#000" />
            <g fill="#fff">
                {[...cells, ...stampCells].map(([x, y, w, h]) => <rect key={`${x}-${y}`} x={x} y={y} width={w} height={h} />)}
                {stampCols.map(([x, w]) => [[496, 3], [500, 3], [514, 5], [520, 2], [523, 3], [528, 1], [530, 2]].map(([y, h]) => (
                    <rect key={`${x}-${y}`} x={x} y={y} width={w} height={h} />
                )))}
                <path d="M940 514h9v3h-9zM955 514h9v3h-9zM940 524h7v2h-7zM955 524h7v2h-7z" />
            </g>
            <g stroke="#000" strokeDasharray="3 1 2 1 5 1 1 1">
                {scribbles.map((d) => <path key={d} d={d} />)}
            </g>
            <path d="M1283 388.500h10M1285 387.500h7M1287 389.500h6M1293.500 389v5M1283 403.500h10M1284 402.500h8M1284 401.500h6M1293.500 399v5M1284 425.500h9M1285 424.500h6M1285 426.500h7M1293.500 425v6M1291 394.500h4M1291 431.500h4" stroke="#ff00ff" />
        </g>
    </svg>
);

const SheetTab = ({ label, active }) => (
    <button className={clsx('relative h-full -mr-0.5 flex items-center justify-center text-black', active ? 'w-[60px] font-bold z-10' : 'w-[29px]')}>
        <svg viewBox="0 0 30 16" preserveAspectRatio="none" className="absolute inset-0 w-full h-full">
            <path d={active ? 'M0 0L3.500 15H26.500L30 0' : 'M0 0L7 15H23L30 0'} fill={active ? '#fff' : '#f0f0f0'} stroke="#333" vectorEffect="non-scaling-stroke" />
        </svg>
        <span className="relative">{label}</span>
    </button>
);

const Document = () => (
    <section className="flex-1 min-w-0 flex flex-col pl-[7px]">
        <div className="h-[21px] flex items-end bg-[#bad7fb] pr-2">
            <button className="ml-px w-[110px] h-[18px] flex items-center pl-5 bg-white rounded-t-sm font-bold text-[11px] text-[#222] font-[Liberation_Sans,sans-serif]">
                <span className="flex-1 text-left whitespace-nowrap">Без имени0*</span>
                <CloseIcon className="mr-1.5" />
            </button>
            <span className="flex-1" />
            <svg viewBox="0 0 10 6" className="w-2.5 h-1.5 mb-1.5"><path d="M0 0h10L5 6z" fill="#3c6cb0" /></svg>
        </div>
        <div className="flex-1 min-h-0 flex flex-col bg-white border-t-2 border-l-2 border-[#6d7178] pr-[3px] pb-[5px]">
            <div className="flex-1 min-h-0 flex">
                <div className="flex-1 min-w-0 overflow-hidden"><Drawing /></div>
                <VScroll before={149} thumb={213} after={77} />
            </div>
            <div className="h-[19px] shrink-0 flex items-center bg-[#f0f0f0] border-t border-[#8a8a8a] text-[11px] font-[Liberation_Sans,sans-serif]">
                <div className="grow-[483] basis-0 h-full flex items-center pl-1">
                    <Arrow dir="left" />
                    <Arrow dir="right" />
                    <span className="w-1" />
                    <SheetTab label="Модель" active />
                    {['A4', 'A3', 'A2', 'A1', 'A0'].map((s) => <SheetTab key={s} label={s} />)}
                    <span className="flex-1" />
                    <Icon name="list" />
                </div>
                <span className="w-1 h-full border-r-2 border-[#9a9a9a]" />
                <div className="grow-[501] basis-0 flex items-center h-full">
                    <Arrow dir="left" />
                    <div className="grow-[90]" />
                    <div className="w-[86px] h-[15px] border border-[#979797] rounded-xs bg-linear-to-b from-[#f5f5f5] to-[#c6c7c9] flex items-center justify-center gap-0.5">
                        <i className="w-px h-1.5 bg-[#444]" />
                        <i className="w-px h-1.5 bg-[#444]" />
                        <i className="w-px h-1.5 bg-[#444]" />
                    </div>
                    <div className="grow-[290]" />
                    <Arrow dir="right" />
                </div>
                <svg viewBox="0 0 17 17" className="w-[17px] h-[17px] shrink-0"><path d="M4 16L15 5M8 16l7-7M12 16l3-3" stroke="#888" /></svg>
            </div>
        </div>
    </section>
);

const CommandLine = () => (
    <section className="h-[70px] shrink-0 flex mt-1 ml-[25px] mr-px">
        <div className="w-[17px] shrink-0 flex flex-col items-center bg-[#b1caea] text-[#1d4f99] pt-1.5 overflow-hidden">
            <CloseIcon className="shrink-0" />
            <PinIcon className="shrink-0 mt-2.5 -rotate-90" />
            <span className="mt-1 [writing-mode:vertical-rl] rotate-180 text-[11px] leading-4">Коман</span>
        </div>
        <div className="flex-1 flex flex-col border-t-2 border-l-2 border-[#6d7178] bg-white font-['DejaVu_Sans_Mono',monospace] text-[12px] text-[#111]">
            <div className="flex-1 min-h-0 flex bg-[#f0f0f0] border-b-2 border-[#6d7178]">
                <div className="flex-1 min-h-0 overflow-hidden flex flex-col justify-end leading-[14px]">
                    <p>4 найдено</p>
                    <p>4 найдено</p>
                    <p>E,ERASE,C,СТЕРЕТЬ - Удаление</p>
                    <p>2 найдено</p>
                </div>
                <VScroll before={1} thumb={0} after={1} />
            </div>
            <input aria-label="Команда" defaultValue="Команда:" className="h-[15px] w-full outline-none" />
        </div>
    </section>
);

const modes = [
    ['ШАГ', false, 'w-8'], ['СЕТКА', false, 'w-10'], ['оПРИВЯЗКА', true, 'w-[71px]'], ['ОТС-ОБЪЕКТ', true, 'w-[74px]'],
    ['ОТС-ПОЛЯР', false, 'w-[71px]'], ['ОРТО', true, 'w-[38px]'], ['ВЕС', true, 'w-[28px]'], ['ШТРИХОВКА', true, 'w-[74px]'],
];

const StatusIcon = ({ name }) => (
    <button aria-label={name} className="w-5 h-5 flex items-center justify-center border border-[#8faed6] bg-[#e3eefc]"><Icon name={name} /></button>
);

const StatusBar = () => (
    <footer className="h-[25px] shrink-0 flex items-center border-t border-[#4f81bd] border-b border-b-[#334a66] bg-linear-to-b from-[#d9e8fb] from-40% to-[#b5d2f6] to-50% font-['DejaVu_Sans_Condensed','DejaVu_Sans',sans-serif] text-[11px]">
        <span className="w-[213px] pl-0.5 text-[#1d4f99]">78044.4328,8817.3211,0</span>
        <div className="flex gap-px pl-0.5">
            {modes.map(([label, on, width]) => (
                <button
                    key={label}
                    className={clsx(
                        'h-5 flex items-center justify-center whitespace-nowrap border',
                        width,
                        on ? 'border-[#c9953f] bg-linear-to-b from-[#fbd9a2] to-[#fdb85c] text-[#2a0a60]' : 'border-[#8faed6] bg-[#eaf2fd] text-black'
                    )}
                >
                    {label}
                </button>
            ))}
        </div>
        <span className="flex-1" />
        <div className="h-full flex items-center gap-0.5 pl-1.5 pr-px border-l border-[#6f94c4] bg-[#9dbde8]">
            <StatusIcon name="pipes" />
            <StatusIcon name="gridbox" />
            <button className="w-[90px] h-5 border border-[#8faed6] bg-[#e3eefc] text-black">m1:100</button>
            {['pan', 'zoomio', 'zoomwin', 'zoomall', 'regen', 'full'].map((n) => <StatusIcon key={n} name={n} />)}
        </div>
    </footer>
);

const App = () => (
    <div className="h-screen flex flex-col overflow-hidden bg-[#bfdbff] text-[11px] leading-4 font-[Open_Sans,sans-serif]">
        <header className="h-[22px] shrink-0 flex items-start bg-linear-to-b from-[#cfe1f8] to-[#e4effd] border-b-2 border-[#a9d0f7]">
            <svg viewBox="0 0 12 14" className="w-3 h-3.5"><path d="M1 11L5 3q3-2 5 2l0 6q-5 3-9 0z" fill="#a3a8ad" /><path d="M0 2l2 5l2-6" stroke="#2a80d0" fill="none" strokeWidth="2" /></svg>
            <h1 className="flex-1 text-center text-xs text-[#4a70b4] leading-[15px]">nanoCAD СПДС 5 - не для коммерческого использования</h1>
            <div className="flex items-center gap-3.5 pt-1.5 pr-1.5">
                <svg viewBox="0 0 10 10" className="w-2.5 h-2.5"><path d="M1 8h7" stroke="#4f5f78" strokeWidth="2" /></svg>
                <svg viewBox="0 0 10 10" className="w-2.5 h-2.5"><path d="M2.500 3V1.500h6V6H7M.5 3.500h6.500V8H.5z" stroke="#5f6f88" fill="none" /></svg>
                <svg viewBox="0 0 10 10" className="w-2.5 h-2.5"><path d="M1 1l8 8M9 1L1 9" stroke="#5f7090" strokeWidth="2.200" /></svg>
            </div>
        </header>

        <nav className="h-[27px] shrink-0 flex items-center pl-0.5 text-[#16398f]">
            <Grip />
            <div className="flex gap-[15px] pl-1.5">
                {menu.map((m) => <button key={m}>{m}</button>)}
            </div>
        </nav>

        <div className="shrink-0 flex flex-col pl-px">
            <div className="flex gap-0.5">
                <Bar><Grip /><Tools items="new open save | print preview printset plot publish | cut copy paste match erase | undo redo | pan zoomrt | zoomwin zoomsel zoomall | dist ruler | help" /></Bar>
                <Bar className="pl-0.5">
                    <Grip />
                    <Tool name="tstyle" />
                    <Combo label="Стиль текста" value="ГОСТ 2.304" className="w-[205px]" />
                    <ComboEnd />
                    <Tools items="|" />
                    <Tool name="dstyle" />
                    <Combo label="Размерный стиль" value="СПДС" className="w-[205px]" />
                    <ComboEnd />
                </Bar>
                <Bar className="px-0.5"><Grip /><Tool name="nano" /></Bar>
            </div>
            <div className="flex gap-1">
                <Bar><Grip /><Tools items="grid+ ladder+ dimcur+ level+ leader+ slope+ note+ text+ curve+ hatchfr+ corner+ group+ pick+ layout+ form+ | page" /></Bar>
                <Bar>
                    <Grip />
                    <Tools items="clip* | layers |" />
                    <Combo label="Слой" value="0" className="w-[365px]">
                        <Icon name="bulb" /><Icon name="sun" /><Icon name="lock" /><Icon name="swatch" />
                    </Combo>
                    <ComboEnd />
                    <Tools items="lyr1 lyr2 lyr3" />
                    <Combo label="Цвет" value="По слою" className="w-[145px]"><Icon name="swatch" /></Combo>
                    <ComboEnd />
                    <Combo label="Тип линий" value="По слою" className="w-[145px]"><ThinLine /></Combo>
                    <ComboEnd />
                    <Combo label="Вес линий" value="По слою" className="w-[145px]"><ThinLine /></Combo>
                    <ComboEnd />
                </Bar>
            </div>
            <div className="flex">
                <Bar><Grip /><Tools items="orbit planet | cubeT cubeB cubeL cubeR cubeF cubeK | gemSW gemSE gemNE gemNW" /></Bar>
            </div>
        </div>

        <main className="flex-1 min-h-0 flex gap-0.5 pr-px">
            <div className="flex-1 min-w-0 flex flex-col">
                <div className="flex-1 min-h-0 flex pl-px">
                    <div className="shrink-0 pt-6 mr-0.5">
                        <VToolbar items="dimcur dimlin dimver dimali dimord | dimdia dimrad dimjog dimang dimarc | dimqk dimbase dimcont | dimbrk dimbrk2" />
                    </div>
                    <Properties />
                    <Document />
                </div>
                <CommandLine />
            </div>
            <div className="shrink-0 flex flex-col gap-6">
                <VToolbar items="line xline+ pline poly rect+ arc+ circle+ | cloud spline ellipse+ | hatch+ | block+ block2+ | point+ | table bigT+ | orbits" />
                <VToolbar items="bigT textI ab find tstyle tset" />
            </div>
            <div className="shrink-0 pt-6">
                <VToolbar items="erase mirror offset contour array | move rotate | scale stretch | trim extend break open1 open2 join | chamfer fillet | bomb purge" />
            </div>
        </main>

        <StatusBar />
    </div>
);

export default App;
